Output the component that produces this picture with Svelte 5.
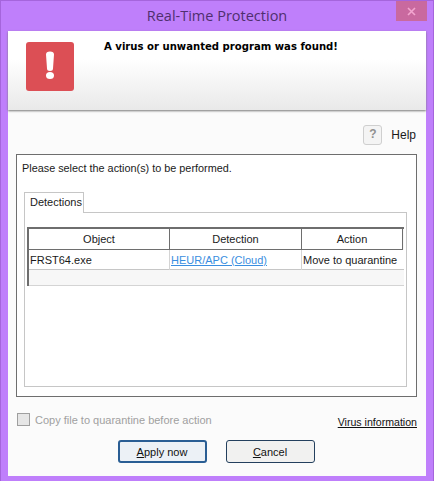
<script>
  const columns = ["Object", "Detection", "Action"];
</script>

<div class="window">
  <div class="titlebar">
    <span class="title">Real-Time Protection</span>
    <button class="close" aria-label="Close">
      <svg width="9" height="9" viewBox="0 0 9 9"><path d="M1 1l7 7M8 1l-7 7" stroke="#f3a6d0" stroke-width="1.6" /></svg>
    </button>
  </div>

  <div class="client">
    <div class="banner">
      <div class="alert">
        <svg width="48" height="49" viewBox="0 0 48 49">
          <rect width="48" height="49" rx="3" fill="#dc4f55" />
          <path d="M20 12.500a4 3 0 0 1 8 0l-1 14a3 2.500 0 0 1-6 0z" fill="#fff" />
          <ellipse cx="24" cy="33.500" rx="4" ry="3.500" fill="#fff" />
        </svg>
      </div>
      <div class="headline">A virus or unwanted program was found!</div>
    </div>

    <div class="body">
      <div class="help-row">
        <span class="help-btn">?</span>
        <span class="help-label">Help</span>
      </div>

      <div class="group">
        <p class="prompt">Please select the action(s) to be performed.</p>
        <div class="tabs">
          <div class="tab">Detections</div>
          <div class="tab-fill"></div>
        </div>
        <div class="pane">
          <div class="table">
            <div class="head">
              {#each columns as col}
                <div class="th">{col}</div>
              {/each}
            </div>
            <div class="row">
              <div class="td">FRST64.exe</div>
              <div class="td link">HEUR/APC (Cloud)</div>
              <div class="td">Move to quarantine</div>
            </div>
            <div class="blank"></div>
          </div>
        </div>
      </div>

      <div class="options">
        <label class="check">
          <span class="box"></span>
          <span>Copy file to quarantine before action</span>
        </label>
        <span class="info">Virus information</span>
      </div>

      <div class="buttons">
        <button class="btn default"><u>A</u>pply now</button>
        <button class="btn"><u>C</u>ancel</button>
      </div>
    </div>
  </div>
</div>

<style>
  :global(body) {
    margin: 0;
    background: #b87cf0;
  }

  .window {
    width: 434px;
    height: 481px;
    box-sizing: border-box;
    padding: 0 7px 5px;
    display: flex;
    flex-direction: column;
    background: #bf7ffb;
    border: 1px solid #a565dc;
    border-bottom: none;
    font-family: "Liberation Sans", sans-serif;
    font-size: 11px;
    color: #1a1a1a;
  }

  .titlebar {
    height: 30px;
    flex: none;
    display: flex;
    align-items: center;
    justify-content: center;
    position: relative;
  }

  .title {
    font-family: "Open Sans", sans-serif;
    font-size: 14.5px;
    color: #4f2f6e;
    margin-top: -1px;
  }

  .close {
    position: absolute;
    right: -1px;
    top: 0;
    width: 31px;
    height: 20px;
    padding: 0;
    border: none;
    background: #c9699f;
    display: flex;
    align-items: center;
    justify-content: center;
  }

  .client {
    flex: 1;
    display: flex;
    flex-direction: column;
    background: #fbfbfb;
    min-height: 0;
  }

  .banner {
    height: 79px;
    flex: none;
    box-sizing: border-box;
    display: flex;
    padding: 11px 0 0 18px;
    background: linear-gradient(#fff 0, #fff 35%, #e9e9e9 100%);
    box-shadow: 0 1px 2px #777;
  }

  .alert {
    width: 48px;
    height: 49px;
  }

  .headline {
    margin: -1px 0 0 30px;
    font-family: "DejaVu Sans", sans-serif;
    font-weight: bold;
    font-size: 10.1px;
    color: #000;
  }

  .body {
    flex: 1;
    display: flex;
    flex-direction: column;
    padding: 15px 9px 0 8px;
  }

  .help-row {
    display: flex;
    justify-content: flex-end;
    align-items: center;
    gap: 9px;
    height: 20px;
    padding-right: 1px;
  }

  .help-btn {
    width: 19px;
    height: 20px;
    box-sizing: border-box;
    border: 1px solid #cfcfcf;
    border-radius: 3px;
    background: #f4f4f4;
    color: #909090;
    font-size: 12px;
    font-weight: bold;
    text-align: center;
    line-height: 17px;
  }

  .help-label {
    font-size: 12px;
  }

  .group {
    margin-top: 9px;
    height: 243px;
    box-sizing: border-box;
    border: 1px solid #6e6e6e;
    background: #fff;
    padding: 0 9px 0 7px;
    display: flex;
    flex-direction: column;
  }

  .prompt {
    margin: 6px 0 0 -2px;
    height: 15px;
    line-height: 15px;
    font-size: 10.85px;
  }

  .tabs {
    margin-top: 16px;
    display: flex;
    height: 21px;
    flex: none;
  }

  .tab {
    width: 60px;
    box-sizing: border-box;
    border: 1px solid #c6c6c6;
    border-bottom: none;
    padding: 2px 0 0 5px;
    line-height: 15px;
  }

  .tab-fill {
    flex: 1;
    border-bottom: 1px solid #c6c6c6;
  }

  .pane {
    flex: 1;
    margin-bottom: 9px;
    border: 1px solid #c6c6c6;
    border-top: none;
    padding: 14px 2px 0 2px;
  }

  .table {
    height: 59px;
    box-sizing: border-box;
    border-left: 2px solid #6e6e6e;
    border-top: 2px solid #6e6e6e;
    background: #f7f7f7;
    display: flex;
    flex-direction: column;
  }

  .head,
  .row {
    display: grid;
    grid-template-columns: 141px 132px 1fr;
  }

  .head {
    height: 20px;
    background: #fff;
    border-bottom: 1px solid #6e6e6e;
    border-right: 1px solid #6e6e6e;
    margin-right: 1px;
  }

  .th {
    text-align: center;
    line-height: 20px;
    border-right: 1px solid #6e6e6e;
  }

  .th:last-child {
    border-right: none;
  }

  .row {
    height: 20px;
    background: #fff;
    border-bottom: 1px solid #c6c6c6;
    box-sizing: border-box;
  }

  .td {
    padding-left: 1px;
    line-height: 20px;
    white-space: nowrap;
    border-right: 1px solid #d4d4d4;
  }

  .td:last-child {
    border-right: none;
  }

  .link {
    color: #3a8ee0;
    text-decoration: underline;
  }

  .blank {
    flex: 1;
    border-bottom: 1px solid #d4d4d4;
  }

  .options {
    display: flex;
    justify-content: space-between;
    align-items: flex-start;
    margin-top: 16px;
    padding-left: 1px;
  }

  .check {
    display: flex;
    align-items: center;
    gap: 5px;
    color: #a0a0a0;
  }

  .box {
    width: 11px;
    height: 11px;
    border: 1px solid #9f9f9f;
    background: #e6e6e6;
  }

  .info {
    margin-top: 3px;
    font-size: 10.6px;
    color: #111;
    text-decoration: underline;
  }

  .buttons {
    display: flex;
    justify-content: center;
    gap: 19px;
    margin-top: 12px;
    padding-right: 1px;
  }

  .btn {
    width: 89px;
    height: 23px;
    padding: 0;
    border: 1px solid #24405e;
    border-radius: 3px;
    background: #f1f1f0;
    font: inherit;
    color: #111;
  }

  .btn.default {
    border: 2px solid #2a5e94;
    background: #ecf1f6;
  }
</style>
